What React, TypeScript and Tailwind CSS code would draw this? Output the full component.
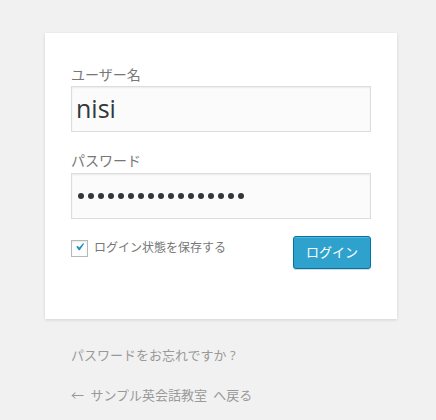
import React from "react";

export default function App() {
  return (
    <div className="w-[436px] h-[420px] bg-[#f1f1f1] overflow-hidden" style={{ fontFamily: '"Open Sans", "Noto Sans CJK JP", sans-serif' }}>
      <div className="pt-[33px] pl-[45px]">
        <div className="w-[352px] h-[286px] bg-white shadow-[0_1px_3px_rgba(0,0,0,0.13)] pt-[31px] px-[26px]">
          <div className="text-[14px] leading-[21px] text-[#777]">ユーザー名</div>
          <div className="mt-[1px] w-[300px] h-[46px] border border-[#ddd] bg-[#fbfbfb] shadow-[inset_0_1px_2px_rgba(0,0,0,0.07)] flex items-center px-[4px] text-[25px] text-[#32373c]">nisi</div>
          <div className="mt-[18px] text-[14px] leading-[21px] text-[#777]">パスワード</div>
          <div className="mt-[2px] w-[300px] h-[46px] border border-[#ddd] bg-[#fbfbfb] shadow-[inset_0_1px_2px_rgba(0,0,0,0.07)] flex items-center px-[6px] text-[#32373c]">
            <div className="flex gap-[4px]">
              {Array.from({ length: 17 }).map((_, i) => (
                <span key={i} className="w-[6px] h-[6px] rounded-full bg-[#32373c]" />
              ))}
            </div>
          </div>
          <div className="mt-[17px] flex justify-between items-start">
            <div className="flex items-center mt-[3px]">
              <span className="w-[17px] h-[17px] border border-[#b4b9be] bg-white shadow-[inset_0_1px_2px_rgba(0,0,0,0.1)] flex items-center justify-center">
                <svg width="20" height="20" viewBox="0 0 20 20" className="-mt-[2px]"><path d="M14.83 4.89l1.34.94-5.81 8.38H9.02L5.78 9.67l1.34-1.25 2.57 2.4z" fill="#1e8cbe" /></svg>
              </span>
              <span className="ml-[6px] text-[12px] text-[#777]">ログイン状態を保存する</span>
            </div>
            <button className="w-[78px] h-[33px] rounded-[3px] bg-[#2ea2cc] border border-[#0074a2] shadow-[inset_0_1px_0_rgba(120,200,230,0.5),0_1px_0_rgba(0,0,0,0.15)] text-white text-[13px]">ログイン</button>
          </div>
        </div>
        <div className="pl-[26px] mt-[27px] text-[13px] text-[#999]">パスワードをお忘れですか ?</div>
        <div className="pl-[26px] mt-[20px] text-[13px] text-[#999] [word-spacing:3px]">← サンプル英会話教室 へ戻る</div>
      </div>
    </div>
  );
}
